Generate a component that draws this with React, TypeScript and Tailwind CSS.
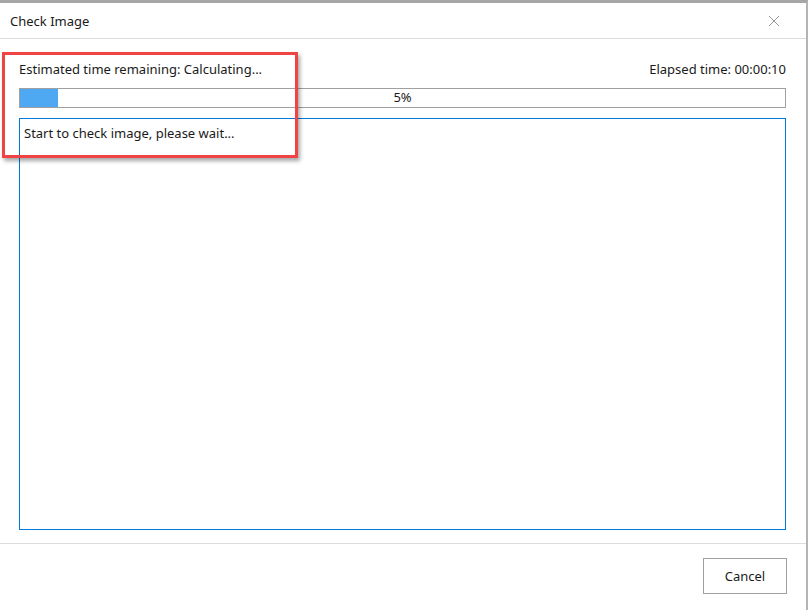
import React from "react";

export default function App() {
  const font = { fontFamily: '"Segoe UI", "Noto Sans", "Open Sans", sans-serif' };
  return (
    <div className="relative w-[808px] h-[610px] bg-white overflow-hidden text-[#1a1a1a]" style={font}>
      <div className="flex flex-col h-full border-t-[3px] border-t-[#a6a6a6] border-r-2 border-r-[#b4b4b4]">
        {/* header */}
        <div className="flex items-center justify-between h-[36px] border-b border-[#dcdcdc] pl-[10px] pr-[26px]">
          <span className="text-[13px] leading-none pt-[1px]">Check Image</span>
          <svg width="12" height="12" viewBox="0 0 12 12">
            <path d="M1 1 L11 11 M11 1 L1 11" stroke="#9a9a9a" strokeWidth="1" fill="none" />
          </svg>
        </div>
        {/* body */}
        <div className="flex flex-col flex-1 px-[19px] pt-[22px] pb-[13px] mr-[1px]">
          <div className="flex justify-between text-[13px] leading-[16px] h-[16px]">
            <span>Estimated time remaining: Calculating...</span>
            <span>Elapsed time: 00:00:10</span>
          </div>
          <div className="relative mt-[11px] h-[20px] border border-[#a0a0a0] bg-white">
            <div className="absolute left-0 top-0 bottom-0 w-[38px] bg-[#4ea8f2]" />
            <div className="absolute inset-0 flex items-center justify-center text-[13px]">5%</div>
          </div>
          <div className="mt-[10px] flex-1 border border-[#0078d7] px-[4px] pt-[6px] text-[13px] leading-[16px]">
            Start to check image, please wait...
          </div>
        </div>
        {/* footer */}
        <div className="h-[67px] border-t border-[#dcdcdc] flex items-start justify-end pr-[19px] pt-[14px]">
          <button className="w-[84px] h-[36px] border border-[#a0a0a0] bg-white text-[13px] pt-[2px]">Cancel</button>
        </div>
      </div>
      {/* red annotation */}
      <div className="absolute left-[2px] top-[52px] w-[296px] h-[106px] border-[3px] border-[#f04444] shadow-[2px_3px_4px_rgba(0,0,0,0.35)]" />
    </div>
  );
}
